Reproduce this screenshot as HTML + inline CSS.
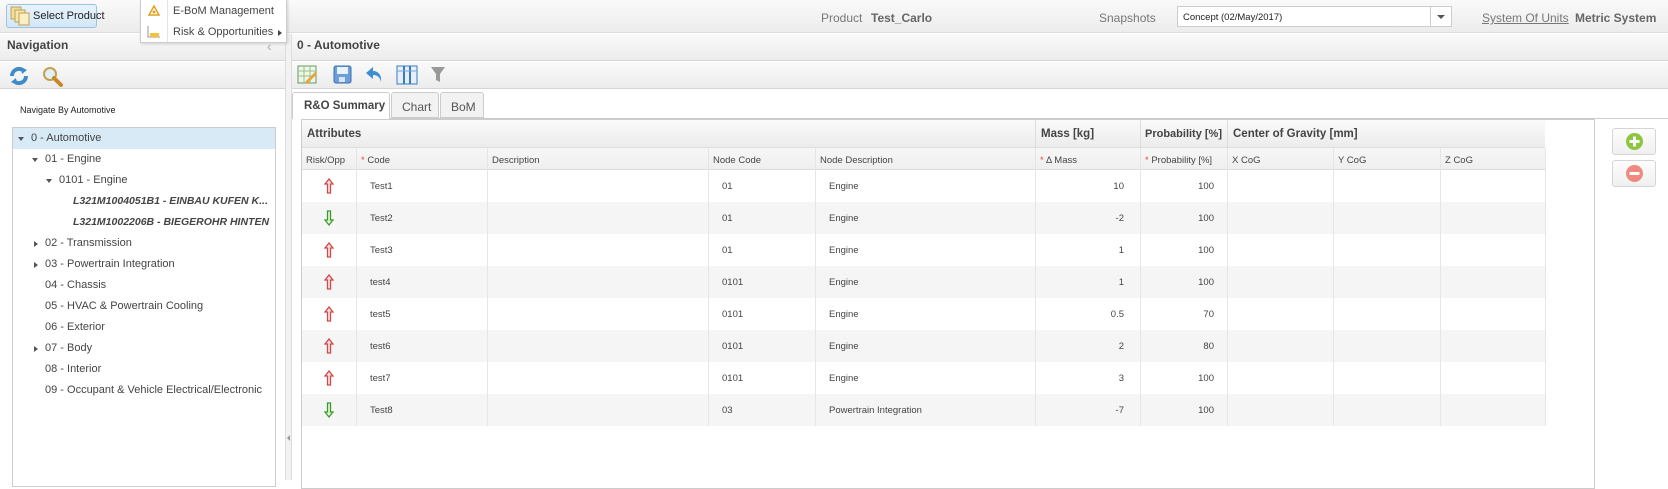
<!DOCTYPE html>
<html><head><meta charset="utf-8"><style>
*{box-sizing:border-box;margin:0;padding:0}
body{width:1668px;height:480px;overflow:hidden;background:#fff;font-family:"Liberation Sans",Arial,sans-serif;color:#333;position:relative}
.a{position:absolute}
.bar{background:linear-gradient(#fafafa,#ececec);}
.t{white-space:nowrap}
.gc{position:absolute;font-size:9.5px;color:#444;white-space:nowrap}
.vl{position:absolute;width:1px;background:#e6e6e6}
.star{color:#e0484f}
</style></head><body>
<div class="a bar" style="left:0;top:0;width:1668px;height:33px;border-bottom:1px solid #ddd"></div>
<div class="a" style="left:6px;top:4px;width:91px;height:24px;border:1px solid #9cc3e0;border-radius:3px;background:linear-gradient(#e8f3fc,#d3e7f7)"></div>
<svg class="a" style="left:9px;top:6px" width="22" height="20"><rect x="2" y="1" width="10" height="12" fill="#f3df9a" stroke="#b9a05a"/><rect x="6" y="4" width="10" height="12" fill="#f7e7ab" stroke="#b9a05a"/><rect x="10" y="7" width="10" height="12" fill="#fbefc3" stroke="#b9a05a"/></svg>
<div class="a t" style="left:33px;top:10px;font-size:11px;color:#222">Select Product</div>
<div class="a t" style="left:821px;top:11px;font-size:12px;color:#777">Product</div>
<div class="a t" style="left:871px;top:11px;font-size:12px;font-weight:bold;color:#666">Test_Carlo</div>
<div class="a t" style="left:1099px;top:11px;font-size:12px;color:#777">Snapshots</div>
<div class="a" style="left:1177px;top:6px;width:275px;height:21px;background:#fff;border:1px solid #ccc"></div>
<div class="a" style="left:1430px;top:6px;width:1px;height:21px;background:#ccc"></div>
<div class="a" style="left:1437px;top:15px;border-top:4px solid #555;border-left:4px solid transparent;border-right:4px solid transparent"></div>
<div class="a t" style="left:1183px;top:12px;font-size:9.5px;color:#222">Concept (02/May/2017)</div>
<div class="a t" style="left:1482px;top:11px;font-size:12px;color:#777;text-decoration:underline">System Of Units</div>
<div class="a t" style="left:1575px;top:11px;font-size:12px;font-weight:bold;color:#666">Metric System</div>

<div class="a bar" style="left:0;top:34px;width:285px;height:27px;border-bottom:1px solid #d5d5d5"></div>
<div class="a t" style="left:7px;top:38px;font-size:12px;font-weight:bold;color:#444">Navigation</div>
<div class="a t" style="left:267px;top:38px;font-size:14px;color:#aaa">‹</div>
<div class="a bar" style="left:0;top:62px;width:285px;height:27px;border-bottom:1px solid #d5d5d5"></div>
<svg class="a" style="left:8px;top:65px" width="22" height="22"><path d="M4 11 A7 7 0 0 1 16 6" fill="none" stroke="#3d8cc9" stroke-width="4"/><path d="M18 11 A7 7 0 0 1 6 16" fill="none" stroke="#3d8cc9" stroke-width="4"/><path d="M13 2 L19 5 L14 9Z M9 20 L3 17 L8 13Z" fill="#3d8cc9"/></svg>
<svg class="a" style="left:41px;top:65px" width="22" height="22"><circle cx="9" cy="9" r="6" fill="#dff0fb" stroke="#c9a04a" stroke-width="2"/><path d="M13 13 L20 20" stroke="#c9862a" stroke-width="4" stroke-linecap="round"/></svg>
<div class="a t" style="left:20px;top:105px;font-size:9px;color:#222">Navigate By Automotive</div>
<div class="a" style="left:12px;top:127px;width:264px;height:360px;border:1px solid #ccc"></div>
<div class="a" style="left:13px;top:128px;width:262px;height:21px;background:#d9eaf7"></div>
<div class="a" style="left:0;top:0;width:1668px;height:480px;font-size:11px;color:#444;clip-path:inset(127px 1393px 0 12px)">
<div class="a" style="left:18px;top:137px;border-top:4px solid #555;border-left:3px solid transparent;border-right:3px solid transparent"></div>
<div class="a t" style="left:31px;top:132px">0 - Automotive</div>
<div class="a" style="left:32px;top:158px;border-top:4px solid #555;border-left:3px solid transparent;border-right:3px solid transparent"></div>
<div class="a t" style="left:45px;top:153px">01 - Engine</div>
<div class="a" style="left:46px;top:179px;border-top:4px solid #555;border-left:3px solid transparent;border-right:3px solid transparent"></div>
<div class="a t" style="left:59px;top:174px">0101 - Engine</div>
<div class="a t" style="left:73px;top:195px;font-weight:bold;font-style:italic;font-size:10.5px">L321M1004051B1 - EINBAU KUFEN K...</div>
<div class="a t" style="left:73px;top:216px;font-weight:bold;font-style:italic;font-size:10.5px">L321M1002206B - BIEGEROHR HINTEN</div>
<div class="a" style="left:34px;top:241px;border-left:4px solid #555;border-top:3px solid transparent;border-bottom:3px solid transparent"></div>
<div class="a t" style="left:45px;top:237px">02 - Transmission</div>
<div class="a" style="left:34px;top:262px;border-left:4px solid #555;border-top:3px solid transparent;border-bottom:3px solid transparent"></div>
<div class="a t" style="left:45px;top:258px">03 - Powertrain Integration</div>
<div class="a t" style="left:45px;top:279px">04 - Chassis</div>
<div class="a t" style="left:45px;top:300px">05 - HVAC &amp; Powertrain Cooling</div>
<div class="a t" style="left:45px;top:321px">06 - Exterior</div>
<div class="a" style="left:34px;top:346px;border-left:4px solid #555;border-top:3px solid transparent;border-bottom:3px solid transparent"></div>
<div class="a t" style="left:45px;top:342px">07 - Body</div>
<div class="a t" style="left:45px;top:363px">08 - Interior</div>
<div class="a t" style="left:45px;top:384px">09 - Occupant &amp; Vehicle Electrical/Electronic</div>
</div>
<div class="a" style="left:285px;top:34px;width:7px;height:446px;background:#f2f2f2;border-left:1px solid #ddd;border-right:1px solid #ddd"></div>
<div class="a" style="left:287px;top:435px;border-right:3px solid #999;border-top:3px solid transparent;border-bottom:3px solid transparent"></div>

<div class="a bar" style="left:292px;top:34px;width:1376px;height:27px;border-bottom:1px solid #d5d5d5"></div>
<div class="a t" style="left:297px;top:38px;font-size:12px;font-weight:bold;color:#444">0 - Automotive</div>
<div class="a bar" style="left:292px;top:62px;width:1376px;height:27px;border-bottom:1px solid #d5d5d5"></div>
<svg class="a" style="left:297px;top:64px" width="22" height="22"><rect x="1" y="2" width="18" height="17" fill="#eef6ea" stroke="#6a9a5a"/><path d="M1 7H19M1 12H19M7 2V19M13 2V19" stroke="#9bc08a"/><path d="M8 18 L18 8 L20 10 L10 20 Z" fill="#e8a33a"/></svg>
<svg class="a" style="left:333px;top:64px" width="20" height="22"><rect x="1" y="2" width="17" height="17" rx="2" fill="#6c9fd8" stroke="#3d6fae"/><rect x="4" y="3" width="11" height="7" fill="#e9f1fb"/><rect x="6" y="13" width="6" height="5" fill="#d7e4f4"/></svg>
<svg class="a" style="left:364px;top:64px" width="20" height="22"><path d="M9 3 L2 9 L9 15 V11 C13 11 16 13 17 18 C18 11 14 7 9 7 Z" fill="#3f8dd3"/></svg>
<svg class="a" style="left:396px;top:64px" width="22" height="22"><rect x="1" y="2" width="20" height="18" fill="#e5f0fa" stroke="#3a7bbf"/><path d="M8 2V20M14 2V20" stroke="#3a7bbf" stroke-width="2"/><path d="M1 7H21" stroke="#7aa5d2"/></svg>
<svg class="a" style="left:430px;top:66px" width="16" height="18"><path d="M1 1 H15 L10 8 V16 L6 14 V8 Z" fill="#999"/></svg>

<div class="a" style="left:292px;top:118px;width:1376px;height:1px;background:#ccc"></div>
<div class="a" style="left:292px;top:92px;width:98px;height:27px;background:#fff;border:1px solid #ccc;border-bottom:none;border-radius:3px 3px 0 0"></div>
<div class="a t" style="left:304px;top:100px;font-size:11.5px;font-weight:bold;color:#444">R&amp;O Summary</div>
<div class="a" style="left:391px;top:92px;width:48px;height:26px;background:#f2f2f2;border:1px solid #ccc;border-radius:3px 3px 0 0"></div>
<div class="a t" style="left:402px;top:100px;font-size:12px;color:#555">Chart</div>
<div class="a" style="left:440px;top:92px;width:44px;height:26px;background:#f2f2f2;border:1px solid #ccc;border-radius:3px 3px 0 0"></div>
<div class="a t" style="left:451px;top:100px;font-size:12px;color:#555">BoM</div>

<div class="a" style="left:301px;top:119px;width:1294px;height:370px;border:1px solid #ccc;background:#fff"></div>
<div class="a bar" style="left:302px;top:120px;width:1292px;height:28px;border-bottom:1px solid #ddd"></div>
<div class="a bar" style="left:302px;top:148px;width:1292px;height:22px;border-bottom:1px solid #ddd;background:linear-gradient(#f7f7f7,#efefef)"></div>
<div class="a" style="left:1545px;top:120px;width:49px;height:50px;background:#fff"></div>
<div class="a t" style="left:307px;top:128px;font-size:11.5px;font-weight:bold;color:#444">Attributes</div>
<div class="a t" style="left:1041px;top:128px;font-size:11.5px;font-weight:bold;color:#444">Mass [kg]</div>
<div class="a t" style="left:1145px;top:128px;font-size:11px;font-weight:bold;color:#444">Probability [%]</div>
<div class="a t" style="left:1233px;top:128px;font-size:11.5px;font-weight:bold;color:#444">Center of Gravity [mm]</div>
<div class="a" style="left:1035px;top:120px;width:1px;height:50px;background:#ddd"></div>
<div class="a" style="left:1140px;top:120px;width:1px;height:50px;background:#ddd"></div>
<div class="a" style="left:1227px;top:120px;width:1px;height:50px;background:#ddd"></div>
<div class="a" style="left:1545px;top:148px;width:1px;height:22px;background:#ddd"></div>
<div class="gc" style="left:306px;top:155px">Risk/Opp</div>
<div class="gc" style="left:361px;top:155px"><span class="star">*</span> Code</div>
<div class="gc" style="left:492px;top:155px">Description</div>
<div class="gc" style="left:713px;top:155px">Node Code</div>
<div class="gc" style="left:820px;top:155px">Node Description</div>
<div class="gc" style="left:1040px;top:155px"><span class="star">*</span> Δ Mass</div>
<div class="gc" style="left:1145px;top:155px"><span class="star">*</span> Probability [%]</div>
<div class="gc" style="left:1232px;top:155px">X CoG</div>
<div class="gc" style="left:1338px;top:155px">Y CoG</div>
<div class="gc" style="left:1445px;top:155px">Z CoG</div>
<div class="a" style="left:302px;top:202px;width:1243px;height:32px;background:#f5f5f5"></div>
<div class="a" style="left:302px;top:266px;width:1243px;height:32px;background:#f5f5f5"></div>
<div class="a" style="left:302px;top:330px;width:1243px;height:32px;background:#f5f5f5"></div>
<div class="a" style="left:302px;top:394px;width:1243px;height:32px;background:#f5f5f5"></div>
<div class="vl" style="left:356px;top:148px;height:278px"></div>
<div class="vl" style="left:487px;top:148px;height:278px"></div>
<div class="vl" style="left:708px;top:148px;height:278px"></div>
<div class="vl" style="left:815px;top:148px;height:278px"></div>
<div class="vl" style="left:1035px;top:148px;height:278px"></div>
<div class="vl" style="left:1140px;top:148px;height:278px"></div>
<div class="vl" style="left:1227px;top:148px;height:278px"></div>
<div class="vl" style="left:1333px;top:148px;height:278px"></div>
<div class="vl" style="left:1440px;top:148px;height:278px"></div>
<div class="vl" style="left:1545px;top:148px;height:278px"></div>

<svg width="0" height="0" style="position:absolute"><defs>
<symbol id="up" viewBox="0 0 10 16"><path d="M5 1 L9 6 H6.5 V15 H3.5 V6 H1 Z" fill="#fbe3e3" stroke="#d04848" stroke-width="1.3"/></symbol>
<symbol id="dn" viewBox="0 0 10 16"><path d="M5 15 L9 10 H6.5 V1 H3.5 V10 H1 Z" fill="#e5f5dc" stroke="#3a9a2a" stroke-width="1.3"/></symbol>
</defs></svg>

<svg class="a" style="left:324px;top:178px" width="10" height="16"><use href="#up"/></svg>
<svg class="a" style="left:324px;top:210px" width="10" height="16"><use href="#dn"/></svg>
<svg class="a" style="left:324px;top:242px" width="10" height="16"><use href="#up"/></svg>
<svg class="a" style="left:324px;top:274px" width="10" height="16"><use href="#up"/></svg>
<svg class="a" style="left:324px;top:306px" width="10" height="16"><use href="#up"/></svg>
<svg class="a" style="left:324px;top:338px" width="10" height="16"><use href="#up"/></svg>
<svg class="a" style="left:324px;top:370px" width="10" height="16"><use href="#up"/></svg>
<svg class="a" style="left:324px;top:402px" width="10" height="16"><use href="#dn"/></svg>

<div class="gc" style="left:370px;top:181px">Test1</div><div class="gc" style="left:722px;top:181px">01</div><div class="gc" style="left:829px;top:181px">Engine</div><div class="gc" style="left:1035px;width:89px;text-align:right;top:181px">10</div><div class="gc" style="left:1140px;width:74px;text-align:right;top:181px">100</div>
<div class="gc" style="left:370px;top:213px">Test2</div><div class="gc" style="left:722px;top:213px">01</div><div class="gc" style="left:829px;top:213px">Engine</div><div class="gc" style="left:1035px;width:89px;text-align:right;top:213px">-2</div><div class="gc" style="left:1140px;width:74px;text-align:right;top:213px">100</div>
<div class="gc" style="left:370px;top:245px">Test3</div><div class="gc" style="left:722px;top:245px">01</div><div class="gc" style="left:829px;top:245px">Engine</div><div class="gc" style="left:1035px;width:89px;text-align:right;top:245px">1</div><div class="gc" style="left:1140px;width:74px;text-align:right;top:245px">100</div>
<div class="gc" style="left:370px;top:277px">test4</div><div class="gc" style="left:722px;top:277px">0101</div><div class="gc" style="left:829px;top:277px">Engine</div><div class="gc" style="left:1035px;width:89px;text-align:right;top:277px">1</div><div class="gc" style="left:1140px;width:74px;text-align:right;top:277px">100</div>
<div class="gc" style="left:370px;top:309px">test5</div><div class="gc" style="left:722px;top:309px">0101</div><div class="gc" style="left:829px;top:309px">Engine</div><div class="gc" style="left:1035px;width:89px;text-align:right;top:309px">0.5</div><div class="gc" style="left:1140px;width:74px;text-align:right;top:309px">70</div>
<div class="gc" style="left:370px;top:341px">test6</div><div class="gc" style="left:722px;top:341px">0101</div><div class="gc" style="left:829px;top:341px">Engine</div><div class="gc" style="left:1035px;width:89px;text-align:right;top:341px">2</div><div class="gc" style="left:1140px;width:74px;text-align:right;top:341px">80</div>
<div class="gc" style="left:370px;top:373px">test7</div><div class="gc" style="left:722px;top:373px">0101</div><div class="gc" style="left:829px;top:373px">Engine</div><div class="gc" style="left:1035px;width:89px;text-align:right;top:373px">3</div><div class="gc" style="left:1140px;width:74px;text-align:right;top:373px">100</div>
<div class="gc" style="left:370px;top:405px">Test8</div><div class="gc" style="left:722px;top:405px">03</div><div class="gc" style="left:829px;top:405px">Powertrain Integration</div><div class="gc" style="left:1035px;width:89px;text-align:right;top:405px">-7</div><div class="gc" style="left:1140px;width:74px;text-align:right;top:405px">100</div>

<div class="a" style="left:1612px;top:128px;width:44px;height:27px;border:1px solid #d5d5d5;border-radius:3px;background:linear-gradient(#fdfdfd,#f0f0f0)"></div>
<svg class="a" style="left:1625px;top:132px" width="19" height="19"><circle cx="9.5" cy="9.5" r="8.5" fill="#8cc63f"/><path d="M9.5 4.5V14.5M4.5 9.5H14.5" stroke="#fff" stroke-width="3"/></svg>
<div class="a" style="left:1612px;top:160px;width:44px;height:27px;border:1px solid #d5d5d5;border-radius:3px;background:linear-gradient(#fdfdfd,#f0f0f0)"></div>
<svg class="a" style="left:1625px;top:164px" width="19" height="19"><circle cx="9.5" cy="9.5" r="8.5" fill="#f08a80"/><path d="M4.5 9.5H14.5" stroke="#fff" stroke-width="3"/></svg>

<div class="a" style="left:140px;top:-1px;width:147px;height:44px;background:#fff;border:1px solid #ccc;box-shadow:1px 1px 3px rgba(0,0,0,.15);z-index:10">
<div class="a" style="left:26px;top:0;width:1px;height:42px;background:#e4e4e4"></div>
<svg class="a" style="left:6px;top:4px" width="14" height="14"><path d="M7 2 L12 11 L2 11 Z" fill="none" stroke="#e0a020" stroke-width="1.5"/><circle cx="7" cy="8" r="1.5" fill="#e0a020"/></svg>
<svg class="a" style="left:6px;top:25px" width="14" height="14"><path d="M1 1 V12 H13" fill="none" stroke="#999"/><rect x="3" y="8" width="9" height="4" fill="#f2c23c"/></svg>
<div class="a t" style="left:32px;top:5px;font-size:11px;color:#444">E-BoM Management</div>
<div class="a t" style="left:32px;top:26px;font-size:11px;color:#444">Risk &amp; Opportunities</div>
<div class="a" style="left:137px;top:30px;border-left:4px solid #444;border-top:3px solid transparent;border-bottom:3px solid transparent"></div>
</div>
</body></html>
